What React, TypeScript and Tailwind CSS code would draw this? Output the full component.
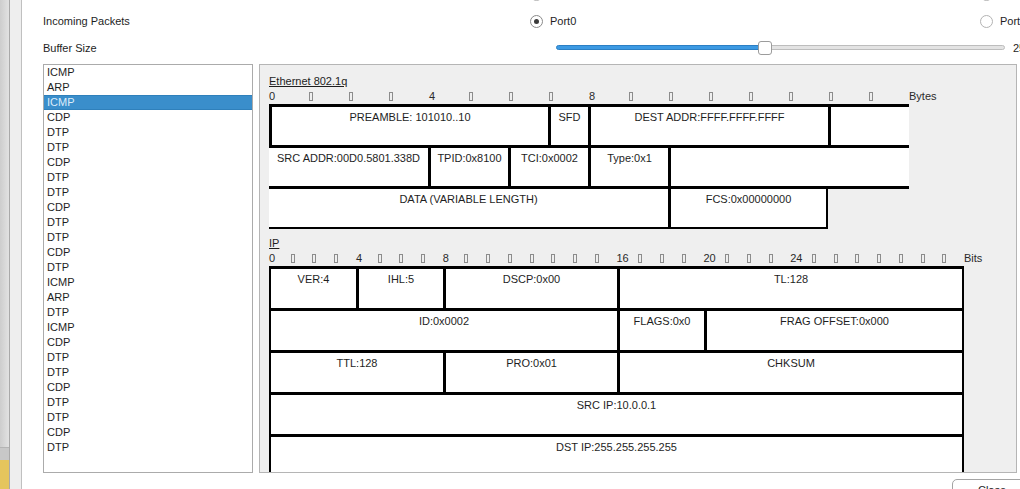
import React from "react";

const packets = [
  "ICMP", "ARP", "ICMP", "CDP", "DTP", "DTP", "CDP", "DTP", "DTP", "CDP", "DTP", "DTP", "CDP",
  "DTP", "ICMP", "ARP", "DTP", "ICMP", "CDP", "DTP", "DTP", "CDP", "DTP", "DTP", "CDP", "DTP",
];

type Cell = { label: string; className: string };

const ethRow1: Cell[] = [
  { label: "PREAMBLE: 101010..10", className: "w-[279px] border-l-[3px]" },
  { label: "SFD", className: "w-[40px] border-l-[3px]" },
  { label: "DEST ADDR:FFFF.FFFF.FFFF", className: "w-[240px] border-l-[3px]" },
  { label: "", className: "w-[81px] border-l-[3px]" },
];

const ethRow2: Cell[] = [
  { label: "SRC ADDR:00D0.5801.338D", className: "w-[159px]" },
  { label: "TPID:0x8100", className: "w-[80px] border-l-[3px]" },
  { label: "TCI:0x0002", className: "w-[80px] border-l-[3px]" },
  { label: "Type:0x1", className: "w-[80px] border-l-[3px]" },
  { label: "", className: "w-[241px] border-l-[3px]" },
];

const ethRow3: Cell[] = [
  { label: "DATA (VARIABLE LENGTH)", className: "w-[399px] border-b-2" },
  { label: "FCS:0x00000000", className: "w-[160px] border-l-[3px] border-r-2 border-b-2" },
];

const ipRows: Cell[][] = [
  [
    { label: "VER:4", className: "w-[85px]" },
    { label: "IHL:5", className: "w-[87px] border-l-[3px]" },
    { label: "DSCP:0x00", className: "w-[174px] border-l-[3px]" },
    { label: "TL:128", className: "w-[345px] border-l-[3px]" },
  ],
  [
    { label: "ID:0x0002", className: "w-[346px]" },
    { label: "FLAGS:0x0", className: "w-[87px] border-l-[3px]" },
    { label: "FRAG OFFSET:0x000", className: "w-[258px] border-l-[3px]" },
  ],
  [
    { label: "TTL:128", className: "w-[172px]" },
    { label: "PRO:0x01", className: "w-[174px] border-l-[3px]" },
    { label: "CHKSUM", className: "w-[345px] border-l-[3px]" },
  ],
  [{ label: "SRC IP:10.0.0.1", className: "flex-1" }],
  [{ label: "DST IP:255.255.255.255", className: "flex-1" }],
];

const ethMarks: Record<number, string> = { 0: "0", 4: "4", 8: "8" };
const ipMarks: Record<number, string> = { 0: "0", 4: "4", 8: "8", 16: "16", 20: "20", 24: "24" };

function Tick() {
  return <span className="mt-[4px] inline-block h-[9px] w-[4px] border border-[#8c8c8c]" />;
}

function Radio({ checked }: { checked?: boolean }) {
  return (
    <span
      className={
        checked
          ? "flex h-[13px] w-[13px] shrink-0 items-center justify-center rounded-full border border-[#8a8a8a] bg-white"
          : "flex h-[13px] w-[13px] shrink-0 items-center justify-center rounded-full border border-[#b3b3b3] bg-white"
      }
    >
      {checked ? <span className="h-[5px] w-[5px] rounded-full bg-[#3a3a3a]" /> : null}
    </span>
  );
}

function CellBox({ cell }: { cell: Cell }) {
  return (
    <div className={`h-full shrink-0 border-black bg-white pt-[3px] text-center leading-[14px] ${cell.className}`}>
      {cell.label}
    </div>
  );
}

export default function App() {
  return (
    <div className="flex h-[489px] w-[1020px] overflow-hidden bg-white font-['Liberation_Sans',Arial,sans-serif] text-[11px] text-[#1e1e1e]">
      <div className="flex h-full w-[22px] shrink-0">
        <div className="flex w-[9px] flex-col">
          <div className="flex-1 bg-gradient-to-r from-[#cdcdcd] to-[#e2e2e2]" />
          <div className="h-[13px] border-t border-[#b4b4b4] bg-[#c8c8c8]" />
          <div className="h-[29px] bg-[#e5c55d]" />
        </div>
        <div className="w-[1px] bg-[#a9a9a9]" />
        <div className="w-[11px] bg-[#eeeeee]" />
        <div className="w-[1px] bg-[#c0c0c0]" />
      </div>

      <div className="flex flex-1 flex-col pl-[21px]">
        <div className="mt-[-19px] flex h-[27px] shrink-0 items-center">
          <div className="w-[487px]" />
          <div className="flex w-[450px] items-center">
            <Radio />
          </div>
          <Radio />
        </div>
        <div className="flex h-[27px] shrink-0 items-center">
          <div className="w-[487px]">Incoming Packets</div>
          <div className="flex w-[450px] items-center gap-[7px]">
            <Radio checked />
            <span>Port0</span>
          </div>
          <div className="flex items-center gap-[7px]">
            <Radio />
            <span>Port1</span>
          </div>
        </div>
        <div className="flex h-[27px] shrink-0 items-center">
          <div className="w-[513px]">Buffer Size</div>
          <div className="relative flex h-[5px] w-[449px] -translate-y-[1px]">
            <div className="w-[209px] rounded-l-full border border-[#2c7fc4] bg-[#3c9ae3]" />
            <div className="flex-1 rounded-r-full border border-[#bdbdbd] bg-[#e3e3e3]" />
            <div className="absolute left-[202px] top-1/2 h-[14px] w-[14px] -translate-y-1/2 rounded-[3px] border border-[#9c9c9c] bg-white" />
          </div>
          <span className="ml-[8px]">256</span>
        </div>

        <div className="mt-[2px] flex h-[409px] shrink-0 gap-[6px]">
          <div className="w-[210px] shrink-0 border border-[#ababab] bg-white">
            {packets.map((p, i) =>
              i === 2 ? (
                <div key={i} className="h-[15px] border-y border-[#2f80bb] bg-[#3a8ecb] pl-[3px] leading-[13px] text-[#dcecfa]">
                  {p}
                </div>
              ) : (
                <div key={i} className="h-[15px] pl-[3px] leading-[15px]">
                  {p}
                </div>
              ),
            )}
          </div>

          <div className="w-[758px] shrink-0 overflow-hidden border border-[#b5b5b5] bg-[#efefef] pl-[9px] pt-[9px]">
            <div className="h-[14px] leading-[14px] underline">Ethernet 802.1q</div>
            <div className="flex h-[16px] leading-[16px] text-[#2a2a2a]">
              {Array.from({ length: 16 }, (_, i) => (
                <div key={i} className="flex w-[40px] shrink-0">
                  {ethMarks[i] ?? <Tick />}
                </div>
              ))}
              <span>Bytes</span>
            </div>
            <div className="w-[640px]">
              <div className="flex h-[41px] border-t-[3px] border-black bg-white">
                {ethRow1.map((c, i) => (
                  <CellBox key={i} cell={c} />
                ))}
              </div>
              <div className="flex h-[41px] border-t-[3px] border-black bg-white">
                {ethRow2.map((c, i) => (
                  <CellBox key={i} cell={c} />
                ))}
              </div>
              <div className="flex h-[43px] border-t-[3px] border-black">
                {ethRow3.map((c, i) => (
                  <CellBox key={i} cell={c} />
                ))}
              </div>
            </div>

            <div className="mt-[7px] h-[14px] leading-[14px] underline">IP</div>
            <div className="flex h-[16px] leading-[16px] text-[#2a2a2a]">
              {Array.from({ length: 32 }, (_, i) => (
                <div key={i} className="flex w-[21.72px] shrink-0">
                  {ipMarks[i] ?? <Tick />}
                </div>
              ))}
              <span>Bits</span>
            </div>
            <div className="w-[695px]">
              {ipRows.map((row, r) => (
                <div key={r} className="flex h-[42px] border-x-2 border-t-[3px] border-black bg-white">
                  {row.map((c, i) => (
                    <CellBox key={i} cell={c} />
                  ))}
                </div>
              ))}
            </div>
          </div>
          <div className="w-[3px] shrink-0 bg-white" />
        </div>

        <div className="mt-[6px] flex shrink-0">
          <button className="ml-[909px] h-[22px] w-[80px] shrink-0 rounded-[5px] border border-[#a4a4a4] bg-white text-[11px]">
            Close
          </button>
        </div>
      </div>
    </div>
  );
}
